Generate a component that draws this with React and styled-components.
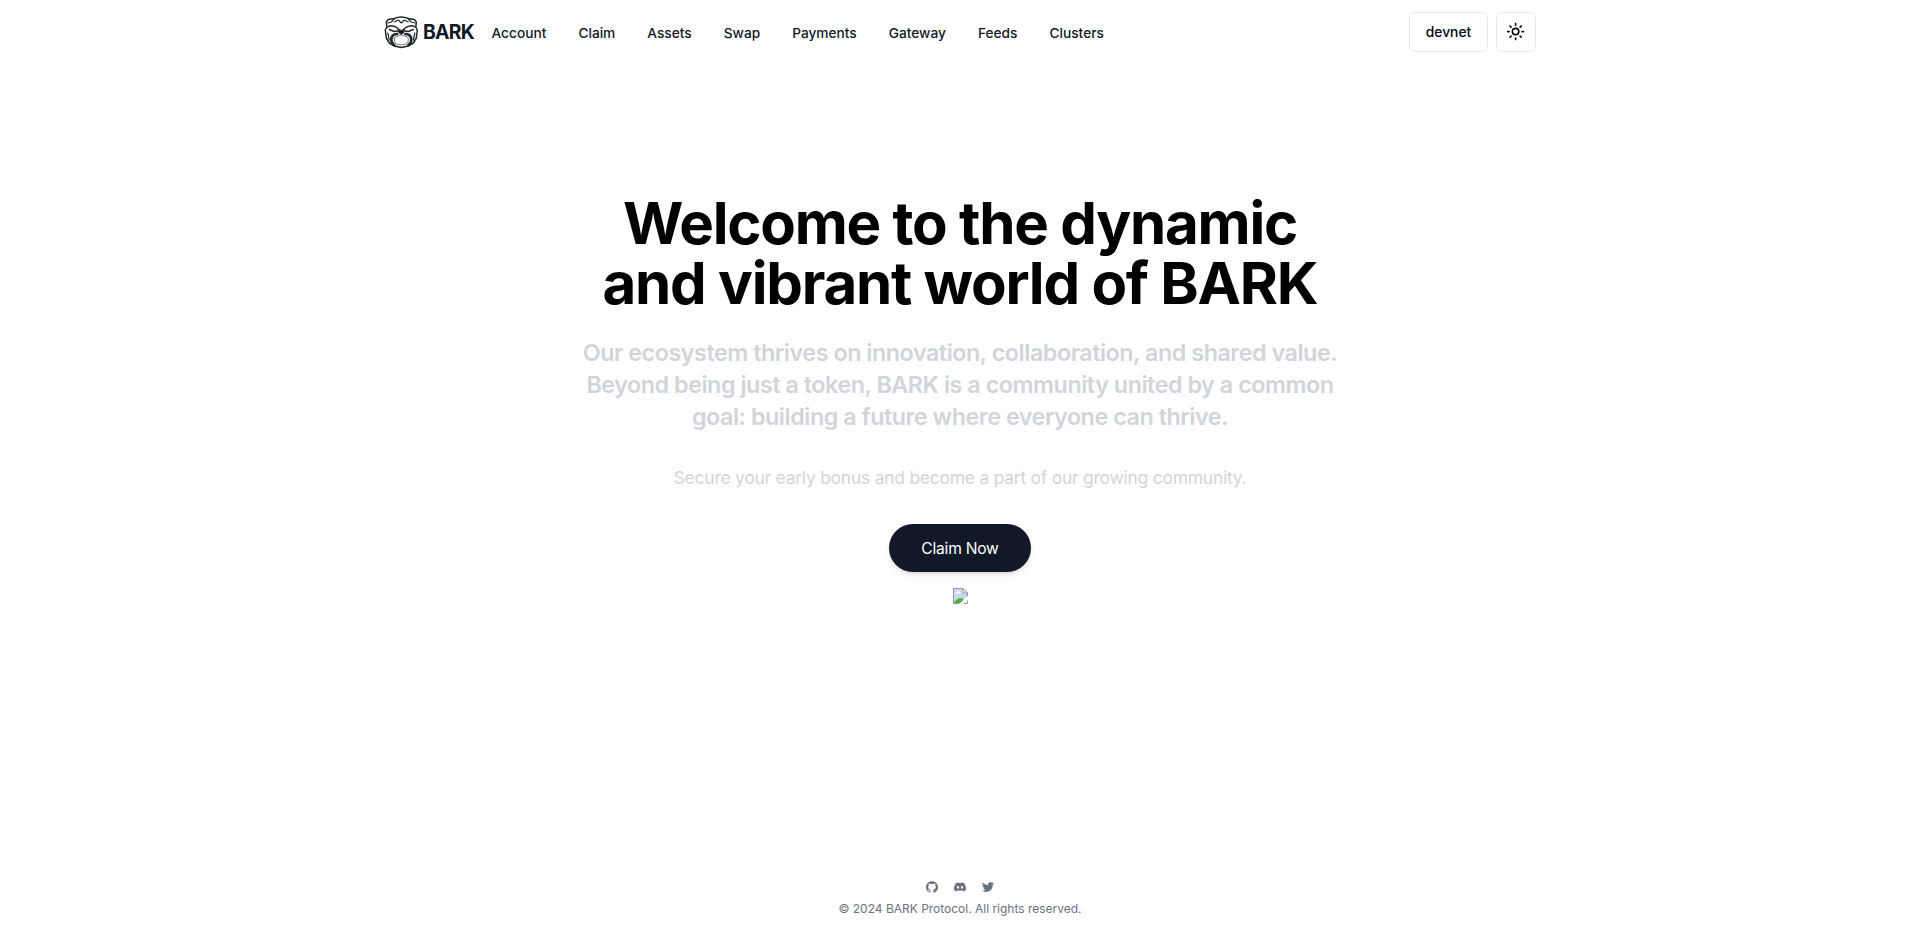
import React from "react";
import styled, { createGlobalStyle } from "styled-components";

const GlobalStyle = createGlobalStyle`
  *, *::before, *::after { box-sizing: border-box; }
  body {
    margin: 0;
    background: #fff;
    color: #111827;
    font-family: Inter, "Liberation Sans", sans-serif;
    -webkit-font-smoothing: antialiased;
  }
`;

const Page = styled.div`
  display: flex;
  flex-direction: column;
  height: 933px;
  overflow: hidden;
`;

const Header = styled.header`
  width: 1152px;
  height: 64px;
  margin: 0 auto;
  display: flex;
  align-items: center;
`;

const Brand = styled.a`
  display: flex;
  align-items: center;
  gap: 4px;
  width: 107.5px;
`;

const BrandName = styled.span`
  font-size: 19.4px;
  line-height: 28px;
  font-weight: 700;
  letter-spacing: -0.8px;
`;

const Nav = styled.nav`
  display: flex;
  gap: 32px;
  flex: 1;
  padding-top: 2px;
`;

const NavLink = styled.a`
  font-size: 13.7px;
  line-height: 20px;
  font-weight: 450;
  letter-spacing: 0.01px;
  white-space: nowrap;
`;

const Actions = styled.div`
  display: flex;
  gap: 8px;
`;

const OutlineButton = styled.button`
  display: flex;
  align-items: center;
  justify-content: center;
  width: ${(p) => p.$width}px;
  height: 40px;
  padding: 0;
  border: 1px solid #e5e7eb;
  border-radius: 6px;
  background: #fff;
  color: #030712;
  font: 450 13.8px/20px Inter, sans-serif;
`;

const Hero = styled.main`
  flex: 1;
  display: flex;
  flex-direction: column;
  align-items: center;
  padding-top: 129px;
  text-align: center;
  white-space: nowrap;
`;

const Title = styled.h1`
  margin: 0;
  color: #000;
  font-size: 58.2px;
  line-height: 60px;
  font-weight: 700;
  letter-spacing: -1.23px;
`;

const Lead = styled.h2`
  margin: 24px 0 0;
  color: #d1d5db;
  font-size: 23.3px;
  line-height: 32px;
  font-weight: 600;
  letter-spacing: -0.45px;
`;

const Note = styled.p`
  margin: 31px 0 0;
  color: #d1d5db;
  font-size: 17.5px;
  line-height: 28px;
  letter-spacing: -0.26px;
`;

const ClaimButton = styled.button`
  width: 142px;
  height: 48px;
  margin-top: 32px;
  padding: 2px 0 0;
  border: 0;
  border-radius: 24px;
  background: #111827;
  color: #fff;
  font: 400 15.6px/24px Inter, sans-serif;
  letter-spacing: -0.23px;
  box-shadow: 0 4px 6px -1px rgb(0 0 0 / 0.1), 0 2px 4px -2px rgb(0 0 0 / 0.1);
`;

const MissingImage = styled.svg`
  display: block;
  margin-top: 16px;
`;

const Footer = styled.footer`
  height: 61px;
  display: flex;
  flex-direction: column;
  align-items: center;
  color: #6b7280;
`;

const Socials = styled.div`
  display: flex;
  gap: 16px;
  padding-top: 9px;
  svg { display: block; width: 12px; height: 12px; fill: currentColor; }
`;

const Copyright = styled.p`
  margin: 8px 0 0;
  font-size: 12px;
  line-height: 16px;
  letter-spacing: -0.01px;
`;

const links = ["Account", "Claim", "Assets", "Swap", "Payments", "Gateway", "Feeds", "Clusters"];

function BulldogLogo() {
  return (
    <svg width="35" height="34" viewBox="0.7 0 35 34" fill="none" stroke="#20272b" strokeLinecap="round" strokeLinejoin="round">
      <path d="M3 7 5 4.500 11 3.500Q18 .5 25 3.500L31 4.500 33 7 32.500 12 34 15 33 23 30 28 25 31 18 32.500 11 31 6 28 3 23 2 15 3.500 12Z" fill="#fff" strokeWidth="1.500" />
      <path d="M4.500 8 8 7 11 4M31.500 8 28 7 25 4M11 7 15 5 18 8 21 5 25 7" strokeWidth="1.100" />
      <path d="M4 12Q9 9 15 13.500M32 12Q27 9 21 13.500M6 14.500 11 16.500 14.500 16M30 14.500 25 16.500 21.500 16" strokeWidth="1.400" />
      <path d="M15 14 18 15.500 21 14 20.500 17.500 18 19.500 15.500 17.500Z" fill="#111827" strokeWidth="1" />
      <path d="M14 19Q8 19 8 25 8 28 11 30M22 19Q28 19 28 25 28 28 25 30" strokeWidth="2.600" />
      <path d="M4.500 18 6 25M31.500 18 30 25" strokeWidth="1.200" />
      <path d="M11 23.500Q11.500 21 15 21L18 20 21 21Q24.500 21 25 23.500 25.500 27 23 29 18 31 13 29 10.500 27 11 23.500Z" fill="#fff" strokeWidth=".6" />
    </svg>
  );
}

function SunIcon() {
  return (
    <svg width="19.2" height="19.2" viewBox="0 0 24 24" fill="none" stroke="currentColor" strokeWidth="2" strokeLinecap="round">
      <circle cx="12" cy="12" r="4" />
      <path d="M12 2v2M12 20v2M4.930 4.930l1.410 1.410M17.660 17.660l1.410 1.410M2 12h2M20 12h2M6.340 17.660l-1.410 1.410M19.070 4.930l-1.410 1.410" />
    </svg>
  );
}

export default function App() {
  return (
    <>
      <GlobalStyle />
      <Page>
        <Header>
          <Brand>
            <BulldogLogo />
            <BrandName>BARK</BrandName>
          </Brand>
          <Nav>
            {links.map((label) => <NavLink key={label}>{label}</NavLink>)}
          </Nav>
          <Actions>
            <OutlineButton $width={79}>devnet</OutlineButton>
            <OutlineButton $width={40} aria-label="Toggle theme"><SunIcon /></OutlineButton>
          </Actions>
        </Header>
        <Hero>
          <Title>Welcome to the dynamic<br />and vibrant world of BARK</Title>
          <Lead>
            Our ecosystem thrives on innovation, collaboration, and shared value.<br />
            Beyond being just a token, BARK is a community united by a common<br />
            goal: building a future where everyone can thrive.
          </Lead>
          <Note>Secure your early bonus and become a part of our growing community.</Note>
          <ClaimButton>Claim Now</ClaimButton>
          <MissingImage width="16" height="16" viewBox="0 0 16 16">
            <path d="M1.500.500H11L15.500 5V10L9.500 15.500H1.500Z" fill="#c6d8f5" />
            <path d="M2 15Q5 10 8 10 11 10 12 12L8 16H2Z" fill="#55ad39" />
            <path d="M3.500 5.500Q3.500 4 5 4 6 2 7.500 4 9 4 9 5.500Z" fill="#fff" />
            <path d="M8 15.500H1.500V.500H11L15.500 5V9M15.500 12.500V15.500H12" fill="none" stroke="#969696" />
            <path d="M11 .500V5H15.500Z" fill="#fff" stroke="#969696" />
            <path d="M7 16 16 8V11L11 16Z" fill="#fff" />
          </MissingImage>
        </Hero>
        <Footer>
          <Socials>
            <svg viewBox="0 0 24 24"><path d="M12 .297c-6.630 0-12 5.373-12 12 0 5.303 3.438 9.800 8.205 11.385.6.113.82-.258.82-.577 0-.285-.01-1.040-.015-2.040-3.338.724-4.042-1.610-4.042-1.610C4.422 18.070 3.633 17.700 3.633 17.700c-1.087-.744.084-.729.084-.729 1.205.084 1.838 1.236 1.838 1.236 1.070 1.835 2.809 1.305 3.495.998.108-.776.417-1.305.76-1.605-2.665-.3-5.466-1.332-5.466-5.930 0-1.310.465-2.380 1.235-3.220-.135-.303-.54-1.523.105-3.176 0 0 1.005-.322 3.300 1.230.96-.267 1.980-.399 3-.405 1.020.006 2.040.138 3 .405 2.280-1.552 3.285-1.230 3.285-1.230.645 1.653.24 2.873.12 3.176.765.840 1.230 1.910 1.230 3.220 0 4.610-2.805 5.625-5.475 5.920.42.360.81 1.096.81 2.220 0 1.606-.015 2.896-.015 3.286 0 .315.210.690.825.570C20.565 22.092 24 17.592 24 12.297c0-6.627-5.373-12-12-12" /></svg>
            <svg viewBox="0 0 24 24"><path d="M20.317 4.370a19.791 19.791 0 0 0-4.885-1.515 13.700 13.700 0 0 0-.686 1.370 18.270 18.270 0 0 0-5.487 0 12.640 12.640 0 0 0-.694-1.370A19.736 19.736 0 0 0 3.677 4.370C.533 9.046-.319 13.580.099 18.058a19.900 19.900 0 0 0 5.993 3.030 14.090 14.090 0 0 0 1.304-2.094 13.107 13.107 0 0 1-1.872-.892l.372-.292a14.200 14.200 0 0 0 12.208 0l.373.292a12.299 12.299 0 0 1-1.873.892 16.080 16.080 0 0 0 1.305 2.094 19.839 19.839 0 0 0 6.002-3.030c.500-5.177-.838-9.674-3.594-13.688ZM8.020 15.331c-1.183 0-2.157-1.086-2.157-2.419s.955-2.419 2.157-2.419c1.210 0 2.176 1.095 2.157 2.419 0 1.333-.956 2.419-2.157 2.419Zm7.975 0c-1.183 0-2.157-1.086-2.157-2.419s.955-2.419 2.157-2.419c1.210 0 2.176 1.095 2.157 2.419 0 1.333-.946 2.419-2.157 2.419Z" /></svg>
            <svg viewBox="0 0 24 24"><path d="M23.953 4.570a10 10 0 0 1-2.825.775 4.958 4.958 0 0 0 2.163-2.723 9.990 9.990 0 0 1-3.127 1.184 4.920 4.920 0 0 0-8.384 4.482C7.690 8.095 4.067 6.130 1.640 3.162a4.822 4.822 0 0 0-.666 2.475c0 1.710.870 3.213 2.188 4.096a4.904 4.904 0 0 1-2.228-.616v.060a4.923 4.923 0 0 0 3.946 4.827 4.996 4.996 0 0 1-2.212.085 4.936 4.936 0 0 0 4.604 3.417 9.867 9.867 0 0 1-6.102 2.105c-.390 0-.779-.023-1.170-.067a13.995 13.995 0 0 0 7.557 2.209c9.053 0 13.998-7.496 13.998-13.985 0-.210 0-.420-.015-.630A9.935 9.935 0 0 0 24 4.590z" /></svg>
          </Socials>
          <Copyright>© 2024 BARK Protocol. All rights reserved.</Copyright>
        </Footer>
      </Page>
    </>
  );
}
